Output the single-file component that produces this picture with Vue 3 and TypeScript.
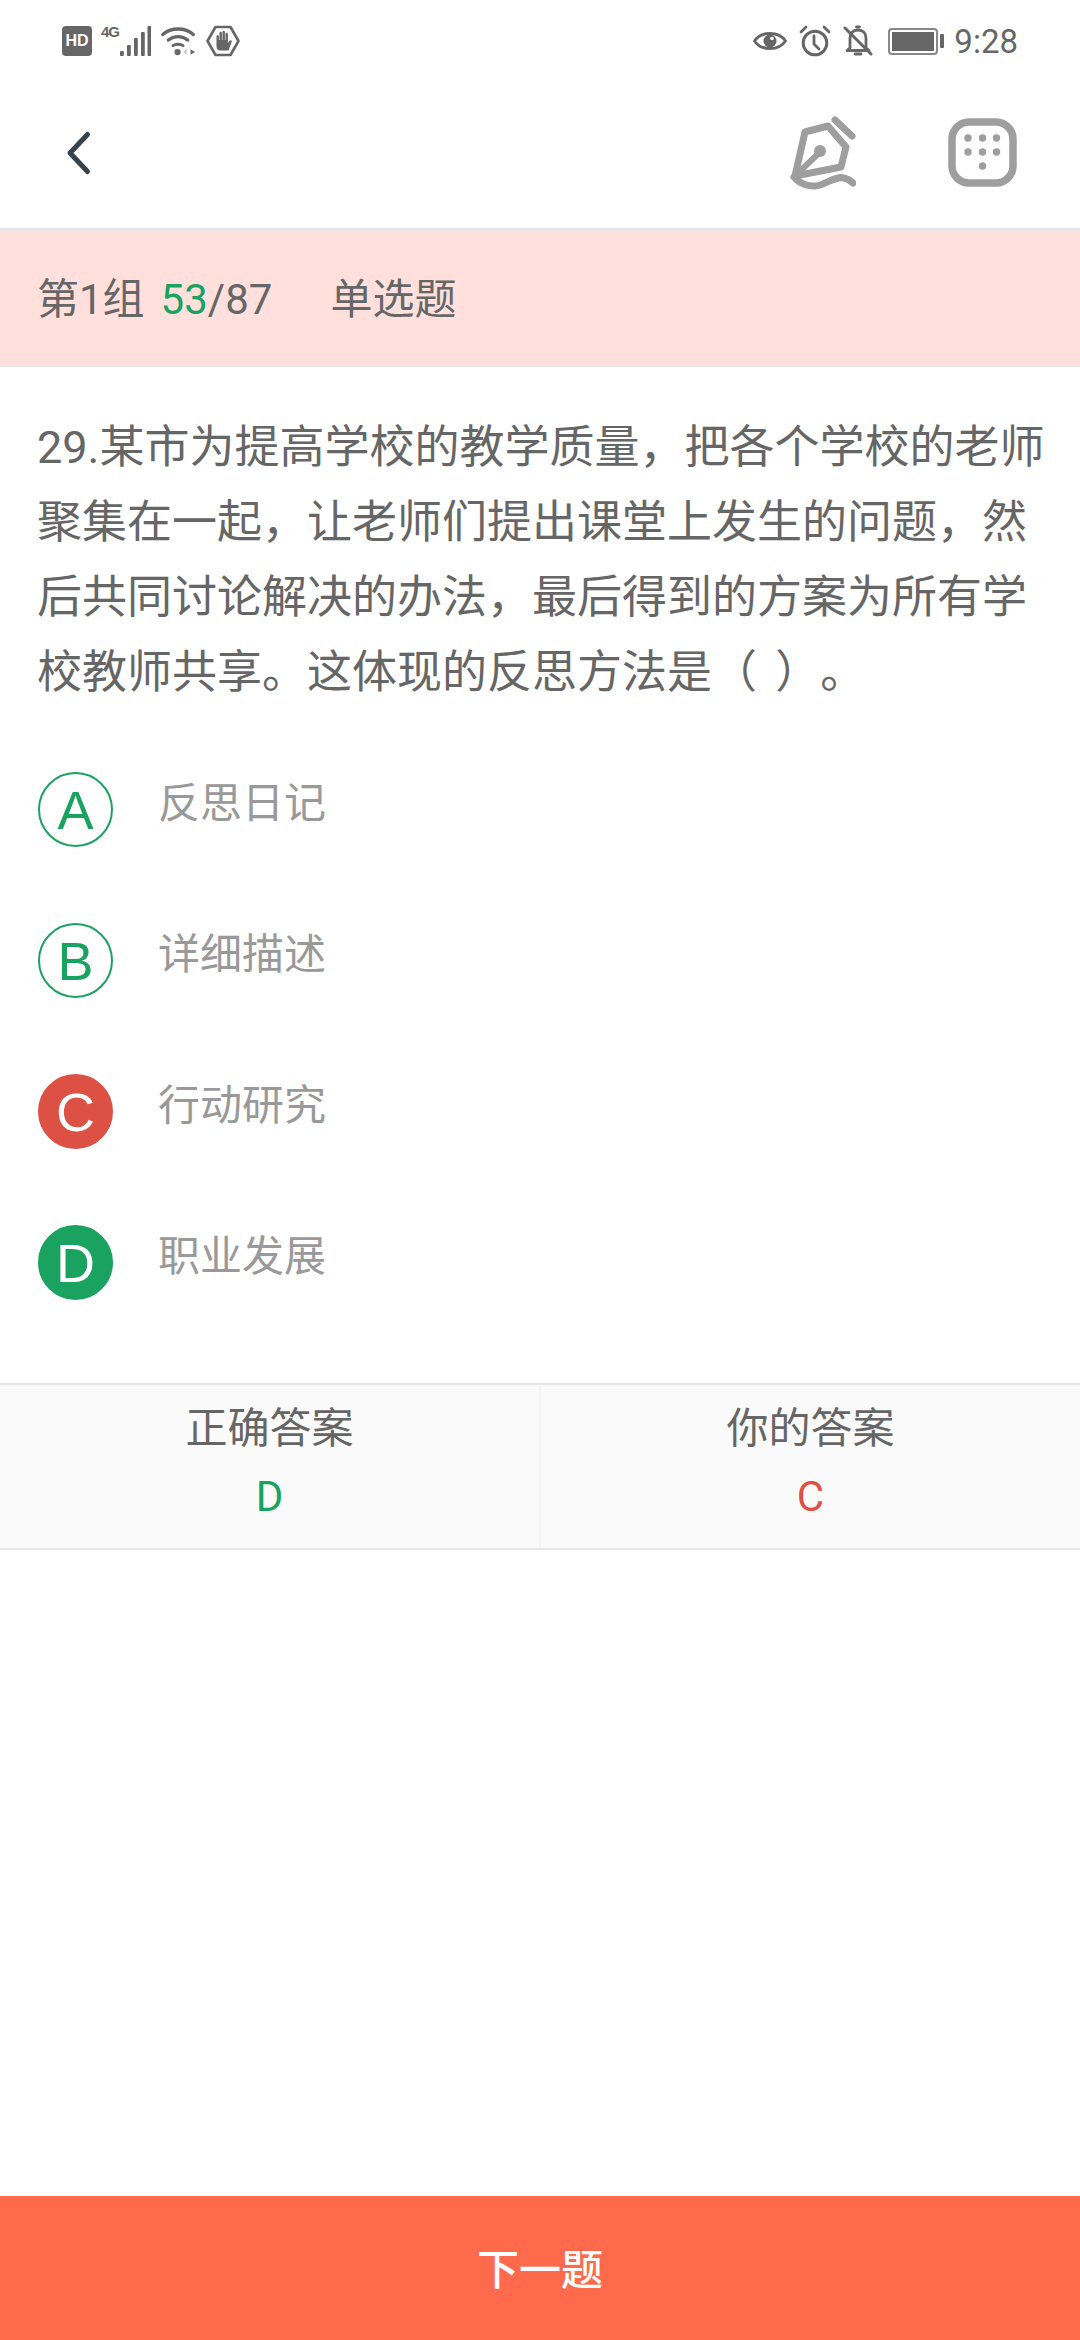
<script setup lang="ts">
interface Option {
  key: string;
  text: string;
  state: "idle" | "wrong" | "right";
}

const options: Option[] = [
  { key: "A", text: "反思日记", state: "idle" },
  { key: "B", text: "详细描述", state: "idle" },
  { key: "C", text: "行动研究", state: "wrong" },
  { key: "D", text: "职业发展", state: "right" },
];

const signalBars = [
  { x: 18, h: 5 },
  { x: 25, h: 11 },
  { x: 32, h: 18 },
  { x: 39, h: 24 },
  { x: 45.500, h: 30 },
];

const gridDots = [
  [20, 20],
  [34.500, 20],
  [48.500, 20],
  [20, 34],
  [34.500, 34],
  [48.500, 34],
  [34.500, 48],
];
</script>

<template>
  <div class="page">
    <div class="status-bar">
      <div class="status-left">
        <span class="hd">HD</span>
        <div class="net">
          <span class="net-label">4G</span>
          <svg width="49" height="30" viewBox="0 0 49 30">
            <rect
              v-for="bar in signalBars"
              :key="bar.x"
              :x="bar.x"
              :y="30 - bar.h"
              width="3.800"
              :height="bar.h"
              rx="1"
              fill="#666"
            />
          </svg>
        </div>
        <svg width="35" height="30" viewBox="0 0 38 32" fill="none">
          <path d="M2 9C11 1 26 1 35 9" stroke="#666" stroke-width="3.600" stroke-linecap="round" />
          <path d="M8 15C14 10 23 10 29 15" stroke="#666" stroke-width="3.600" stroke-linecap="round" />
          <path d="M13 21C16 19 21 19 24 21" stroke="#666" stroke-width="3.200" stroke-linecap="round" />
          <circle cx="18" cy="28" r="3.400" fill="#666" />
          <path d="M28 24l-4 4 4 3z" fill="#ccc" />
          <path d="M32 25l5 3-5 3z" fill="#666" />
        </svg>
        <svg width="34" height="32" viewBox="0 0 34 32" fill="none">
          <path d="M9.500 2h15L32.500 16 24.500 30h-15L1.500 16z" stroke="#666" stroke-width="2.600" stroke-linejoin="round" />
          <path
            d="M10.500 11.500c0-1.600 2.400-1.600 2.400 0V15h.6V8c0-1.600 2.400-1.600 2.400 0v7h.6V7c0-1.600 2.400-1.600 2.400 0v8h.6V9c0-1.600 2.400-1.600 2.400 0v9c1-1.500 1.700-2.700 2.900-2.700 1 0 1.300 1 .7 2.100L22.500 25.500H14c-2.200 0-3.500-1.700-3.500-3.700z"
            fill="#666"
          />
        </svg>
      </div>
      <div class="status-right">
        <svg width="34" height="26" viewBox="0 0 34 26" fill="none">
          <path d="M1.500 13C8 3 26 3 32.500 13 26 23 8 23 1.500 13z" stroke="#666" stroke-width="2.800" stroke-linejoin="round" />
          <circle cx="17" cy="13" r="6.500" fill="#666" />
          <circle cx="19" cy="10.500" r="1.800" fill="#fff" />
        </svg>
        <svg width="32" height="32" viewBox="0 0 32 32" fill="none">
          <circle cx="16" cy="18" r="11.800" stroke="#666" stroke-width="3" />
          <path d="M15 11v8l5 5" stroke="#666" stroke-width="2.800" stroke-linecap="round" stroke-linejoin="round" />
          <path d="M2 7l5-5M30 7l-5-5" stroke="#666" stroke-width="2.800" stroke-linecap="round" />
        </svg>
        <svg width="30" height="32" viewBox="0 0 30 32" fill="none">
          <path d="M7 23V13c0-5 3-8 8-8s8 3 8 8v10l3 2.500H4z" stroke="#666" stroke-width="2.800" stroke-linejoin="round" />
          <path d="M12 29h6" stroke="#666" stroke-width="2.800" stroke-linecap="round" />
          <path d="M13.500 2h3" stroke="#666" stroke-width="2.800" stroke-linecap="round" />
          <path d="M2 3l26 26" stroke="#666" stroke-width="3" stroke-linecap="round" />
        </svg>
        <div class="battery">
          <div class="battery-body"><div class="battery-fill"></div></div>
          <div class="battery-cap"></div>
        </div>
        <span class="clock">9:28</span>
      </div>
    </div>

    <header class="toolbar">
      <svg width="30" height="46" viewBox="0 0 30 46" fill="none">
        <path d="M24.500 4.500L7 23l17.500 18.500" stroke="#36434f" stroke-width="5" stroke-linecap="round" stroke-linejoin="round" />
      </svg>
      <div class="toolbar-actions">
        <svg width="66" height="76" viewBox="0 0 66 76" fill="none" stroke="#9e9e9e" stroke-linecap="round" stroke-linejoin="round">
          <path d="M45 5l17 16" stroke-width="7" />
          <path d="M15 17l23-6 18 21-5 20-46 9z" stroke-width="7" />
          <path d="M6 60l24-23" stroke-width="6" />
          <circle cx="30" cy="36" r="6" fill="#9e9e9e" stroke="none" />
          <path d="M4 62c6 7 16 11 26 8 9-3 17-9 24-7 4 1 7 3 9 5" stroke-width="7" />
        </svg>
        <svg width="70" height="70" viewBox="0 0 70 70" fill="none">
          <rect x="4" y="4" width="61" height="61" rx="17" stroke="#9e9e9e" stroke-width="7.500" />
          <circle v-for="dot in gridDots" :key="dot.join()" :cx="dot[0]" :cy="dot[1]" r="3.700" fill="#9e9e9e" />
        </svg>
      </div>
    </header>

    <div class="group-bar">
      第1组<span class="progress"><em>53</em>/87</span><span class="kind">单选题</span>
    </div>

    <p class="question">29.某市为提高学校的教学质量，把各个学校的老师聚集在一起，让老师们提出课堂上发生的问题，然后共同讨论解决的办法，最后得到的方案为所有学校教师共享。这体现的反思方法是（ ）。</p>

    <ul class="options">
      <li v-for="opt in options" :key="opt.key" class="option">
        <span class="badge" :class="opt.state">{{ opt.key }}</span>
        <span class="option-text">{{ opt.text }}</span>
      </li>
    </ul>

    <div class="answers">
      <div class="answer">
        <span>正确答案</span>
        <span class="value right-text">D</span>
      </div>
      <div class="answer">
        <span>你的答案</span>
        <span class="value wrong-text">C</span>
      </div>
    </div>

    <div class="spacer"></div>

    <button class="next-btn" type="button">下一题</button>
  </div>
</template>

<style>
html,
body {
  margin: 0;
  background: #fff;
}
</style>

<style scoped>
.page {
  width: 1080px;
  height: 2340px;
  display: flex;
  flex-direction: column;
  font-family: Roboto, "Noto Sans CJK SC", sans-serif;
  color: #666;
  background: #fff;
}

.status-bar {
  height: 75px;
  flex: none;
  display: flex;
  justify-content: space-between;
  align-items: center;
  padding: 7px 62px 0;
  box-sizing: border-box;
}

.status-left,
.status-right {
  display: flex;
  align-items: center;
}

.status-left {
  gap: 10px;
}

.status-right {
  gap: 12px;
}

.hd {
  width: 30px;
  height: 30px;
  border-radius: 4px;
  background: #666;
  color: #fff;
  display: flex;
  align-items: center;
  justify-content: center;
  font-family: "Liberation Sans", sans-serif;
  font-size: 16px;
  line-height: 30px;
  font-weight: 700;
}

.net {
  position: relative;
  display: flex;
}

/* sits in the free corner above the short signal bars */
.net-label {
  position: absolute;
  left: -1px;
  top: -2px;
  font-family: "Liberation Sans", sans-serif;
  font-size: 15px;
  line-height: 16px;
  font-weight: 700;
  letter-spacing: -1px;
}

.battery {
  display: flex;
  align-items: center;
  gap: 2px;
  margin-left: 3px;
}

.battery-body {
  width: 50px;
  height: 27px;
  box-sizing: border-box;
  border: 2px solid #888;
  border-radius: 4px;
  padding: 2px;
}

.battery-fill {
  width: 100%;
  height: 100%;
  background: #666;
}

.battery-cap {
  width: 4px;
  height: 14px;
  background: #666;
  border-radius: 1px;
}

.clock {
  font-size: 33px;
  color: #666;
  margin-left: -2px;
}

.toolbar {
  height: 156px;
  flex: none;
  display: flex;
  align-items: center;
  justify-content: space-between;
  padding: 3px 62px 0 63px;
  box-sizing: border-box;
  border-bottom: 3px solid #e6e6e6;
}

.toolbar-actions {
  display: flex;
  align-items: center;
  gap: 92px;
}

.group-bar {
  height: 136px;
  flex: none;
  padding: 3px 37px 0;
  box-sizing: border-box;
  background: #ffe0dc;
  border-bottom: 1px solid #e8e8e8;
  font-size: 42px;
  line-height: 132px;
}

.progress {
  margin-left: 16px;
}

.progress em {
  font-style: normal;
  color: #1aa260;
}

.kind {
  margin-left: 58px;
}

.question {
  margin: 43px 0 0;
  padding: 0 25px 0 37px;
  font-size: 45px;
  line-height: 75px;
  color: #666;
  text-spacing-trim: space-all;
  word-spacing: 7px;
}

.options {
  list-style: none;
  margin: 0;
  padding: 62px 0 0 38px;
  display: flex;
  flex-direction: column;
  gap: 76px;
}

.option {
  display: flex;
  height: 75px;
}

.badge {
  width: 75px;
  height: 75px;
  box-sizing: border-box;
  border-radius: 50%;
  border: 2px solid #1aa260;
  color: #1aa260;
  display: flex;
  align-items: center;
  justify-content: center;
  font-family: "Liberation Sans", sans-serif;
  font-size: 54px;
}

.badge.wrong {
  background: #dd5044;
  border-color: #dd5044;
  color: #fff;
}

.badge.right {
  background: #1aa260;
  color: #fff;
}

.option-text {
  margin-left: 45px;
  margin-top: -6px;
  font-size: 42px;
  line-height: 75px;
  color: #999;
}

.answers {
  margin-top: 83px;
  height: 167px;
  flex: none;
  display: flex;
  box-sizing: border-box;
  background: #fafafa;
  border-top: 2px solid #e6e6e6;
  border-bottom: 2px solid #e6e6e6;
}

.answer {
  flex: 1;
  display: flex;
  flex-direction: column;
  align-items: center;
  font-size: 42px;
  line-height: 60px;
  padding-top: 14px;
}

.answer + .answer {
  border-left: 2px solid #f4f4f4;
}

.value {
  margin-top: 8px;
}

.right-text {
  color: #1aa260;
}

.wrong-text {
  color: #dd5044;
}

.spacer {
  flex: 1;
}

.next-btn {
  height: 144px;
  flex: none;
  border: none;
  padding: 0 0 3px;
  background: #ff6a4d;
  color: #fff;
  font-family: inherit;
  font-size: 42px;
  font-weight: 500;
}
</style>
